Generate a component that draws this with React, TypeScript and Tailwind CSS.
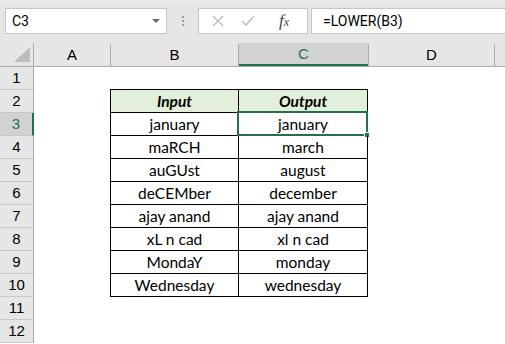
import React from "react";

const rows: [string, string][] = [
  ["january", "january"],
  ["maRCH", "march"],
  ["auGUst", "august"],
  ["deCEMber", "december"],
  ["ajay anand", "ajay anand"],
  ["xL n cad", "xl n cad"],
  ["MondaY", "monday"],
  ["Wednesday", "wednesday"],
];

const cellFont = { fontFamily: "Lato, 'Open Sans', sans-serif" };
const hdrFont = { fontFamily: "'Liberation Sans', Arial, sans-serif" };

function RowHeader({ n, active }: { n: number; active?: boolean }) {
  return (
    <div
      className={`w-[34px] h-[23px] shrink-0 flex items-center justify-center text-[15px] border-b border-[#c8c8c8] ${
        active
          ? "bg-[#d2d2d2] text-[#217346] border-r-2 border-r-[#217346]"
          : "bg-[#e6e6e6] text-black border-r border-r-[#ababab]"
      }`}
      style={hdrFont}
    >
      {n}
    </div>
  );
}

export default function App() {
  return (
    <div className="w-[505px] h-[344px] overflow-hidden bg-white relative">
      {/* toolbar */}
      <div className="h-[43px] bg-[#e6e6e6] border-t-[3px] border-[#ececec] flex items-start pt-[5px] overflow-hidden">
        <div className="ml-[5px] w-[162px] shrink-0 h-[26px] bg-white border border-[#c6c6c6] flex items-center pl-[6px] pr-[6px]">
          <span className="text-[14px] text-black flex-1" style={{ fontFamily: "Roboto, sans-serif" }}>
            C3
          </span>
          <svg width="8" height="5" viewBox="0 0 8 5">
            <path d="M0 0 L8 0 L4 4 Z" fill="#6a6a6a" />
          </svg>
        </div>
        <div className="w-[31px] shrink-0 h-[26px] flex flex-col items-center justify-center gap-[2px]">
          <div className="w-[2px] h-[2px] bg-[#a0a0a0]" />
          <div className="w-[2px] h-[2px] bg-[#a0a0a0]" />
          <div className="w-[2px] h-[2px] bg-[#a0a0a0]" />
        </div>
        <div className="w-[110px] shrink-0 h-[26px] bg-white border border-[#c6c6c6] flex items-center">
          <svg width="12" height="12" viewBox="0 0 12 12" className="ml-[13px]">
            <path d="M1 1 L11 11 M11 1 L1 11" stroke="#c0c0c0" strokeWidth="1.5" />
          </svg>
          <svg width="14" height="12" viewBox="0 0 14 12" className="ml-[17px]">
            <path d="M1 6 L5 10 L13 1" stroke="#c0c0c0" strokeWidth="1.6" fill="none" />
          </svg>
          <span
            className="ml-[24px] text-[17px] italic text-[#444]"
            style={{ fontFamily: "'Liberation Serif', serif" }}
          >
            f<span className="text-[12px]">x</span>
          </span>
        </div>
        <div className="ml-[3px] w-[220px] shrink-0 h-[26px] bg-white border border-[#c6c6c6] flex items-center pl-[11px]">
          <span className="text-[14px] text-black" style={{ fontFamily: "Roboto, sans-serif" }}>
            =LOWER(B3)
          </span>
        </div>
      </div>

      {/* column headers */}
      <div className="flex h-[24px] bg-[#e6e6e6] border-b border-[#ababab]" style={hdrFont}>
        <div className="w-[34px] h-[23px] shrink-0 border-r border-[#ababab] relative">
          <svg width="16" height="15" viewBox="0 0 16 15" className="absolute right-[3px] bottom-[4px]">
            <path d="M16 0 L16 15 L0 15 Z" fill="#bdbdbd" />
          </svg>
        </div>
        <div className="w-[77px] shrink-0 flex items-center justify-center text-[15px] mt-[1px] border-r border-[#ababab] h-[22px]">
          A
        </div>
        <div className="w-[128px] shrink-0 flex items-center justify-center text-[15px] mt-[1px] border-r border-[#ababab] h-[22px]">
          B
        </div>
        <div className="w-[129px] shrink-0 flex items-center justify-center text-[15px] text-[#217346] bg-[#d2d2d2] border-b-2 border-[#217346] h-[23px] pt-[1px]">
          C
        </div>
        <div className="w-[127px] shrink-0 flex items-center justify-center text-[15px] mt-[1px] border-r border-l border-[#ababab] h-[22px]">
          D
        </div>
        <div className="flex-1" />
      </div>

      {/* row 1 */}
      <div className="flex h-[23px]">
        <RowHeader n={1} />
        <div className="w-[76px] shrink-0" />
        <div className="w-[128px] shrink-0 border-b border-black" />
        <div className="w-[130px] shrink-0 border-b border-black" />
      </div>

      {/* row 2 header of table */}
      <div className="flex h-[23px]" style={cellFont}>
        <RowHeader n={2} />
        <div className="w-[76px] shrink-0" />
        <div className="w-[128px] shrink-0 border-l border-b border-black bg-[#e2efda] flex items-center justify-center text-[15.5px] font-bold italic text-black pt-[1px]">
          Input
        </div>
        <div className="w-[130px] shrink-0 border-l border-r border-b border-black bg-[#e2efda] flex items-center justify-center text-[15.5px] font-bold italic text-black pt-[1px]">
          Output
        </div>
      </div>

      {rows.map(([a, b], i) => {
        const n = i + 3;
        const active = n === 3;
        return (
          <div key={n} className="flex h-[23px]" style={cellFont}>
            <RowHeader n={n} active={active} />
            <div className="w-[76px] shrink-0" />
            <div className="w-[128px] shrink-0 border-l border-b border-black flex items-center justify-center text-[15.5px] text-black pt-[1px]">
              {a}
            </div>
            <div className="w-[130px] shrink-0 border-l border-r border-b border-black flex items-center justify-center text-[15.5px] text-black pt-[1px] relative">
              {b}
              {active && (
                <>
                  <div className="absolute left-[-2px] top-[-2px] w-[131px] h-[25px] border-2 border-[#217346]" />
                  <div className="absolute right-[-3px] bottom-[-3px] w-[6px] h-[6px] bg-[#217346] border border-white" />
                </>
              )}
            </div>
          </div>
        );
      })}

      <div className="flex h-[23px]">
        <RowHeader n={11} />
      </div>
      <div className="flex h-[23px]">
        <RowHeader n={12} />
      </div>
    </div>
  );
}
